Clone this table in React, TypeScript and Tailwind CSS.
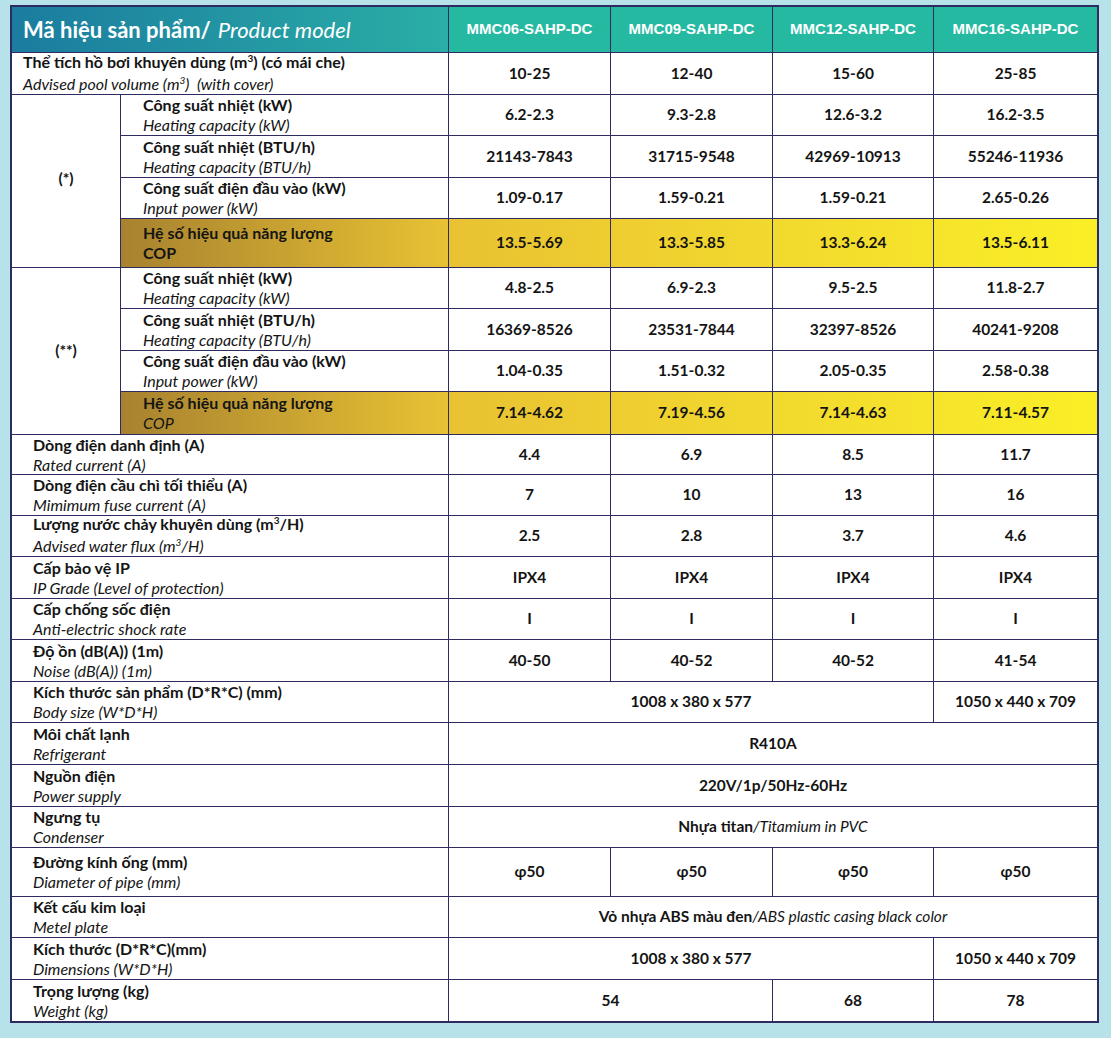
import React from "react";

type V = { t: React.ReactNode; span?: 1 | 2 | 3 | 4 };

const spanCls: Record<number, string> = {
  1: "",
  2: "col-span-2",
  3: "col-span-3",
  4: "col-span-4",
};

const copGrad = [
  "bg-[linear-gradient(90deg,#a8822f,#e8c233)]",
  "bg-[linear-gradient(90deg,#e8c233,#eecd30)]",
  "bg-[linear-gradient(90deg,#eecd30,#f2d92e)]",
  "bg-[linear-gradient(90deg,#f2d92e,#f6e42b)]",
  "bg-[linear-gradient(90deg,#f6e42b,#faef26)]",
];

function Label({
  b,
  i,
  pl,
  span2,
  cop,
}: {
  b: React.ReactNode;
  i: React.ReactNode;
  pl: string;
  span2?: boolean;
  cop?: boolean;
}) {
  return (
    <div
      className={`${span2 ? "col-span-2" : ""} ${cop ? copGrad[0] : "bg-white"} ${pl} flex flex-col justify-center text-[16px] leading-[20px] text-[#141414]`}
    >
      <div className="font-bold whitespace-nowrap">{b}</div>
      <div className="italic whitespace-nowrap">{i}</div>
    </div>
  );
}

function Vals({ vals, cop }: { vals: V[]; cop?: boolean }) {
  let col = 0;
  return (
    <>
      {vals.map((v, k) => {
        const s = v.span ?? 1;
        const g = cop ? copGrad[col + 1] : "bg-white";
        col += s;
        return (
          <div
            key={k}
            className={`${spanCls[s]} ${g} flex items-center justify-center text-[15.5px] font-bold text-[#141414] whitespace-nowrap`}
          >
            {v.t}
          </div>
        );
      })}
    </>
  );
}

const four = (a: string, b: string, c: string, d: string): V[] => [
  { t: a },
  { t: b },
  { t: c },
  { t: d },
];

const M3 = () => (
  <>
    m<span className="text-[10px] relative -top-[6px]">3</span>
  </>
);

export default function App() {
  const subPl = "pl-[22px]";
  const mainPl = "pl-[21px]";
  return (
    <div className="w-[1111px] h-[1038px] bg-[#b8e2e9] pt-[5px] pl-[10px] font-[Lato,'Open_Sans',sans-serif]">
      <div className="w-[1089px] border-2 border-[#2d2b5f] bg-[#2d2b5f] grid gap-px grid-cols-[108px_327px_161px_161px_160px_163px] grid-rows-[45px_41px_40px_41px_40px_48px_40px_41px_40px_42px_39px_40px_40px_41px_40px_41px_40px_41px_41px_40px_48px_40px_41px_41px]">
        {/* Header */}
        <div className="col-span-2 bg-[linear-gradient(90deg,#1b7c9f,#2aaea6)] flex items-center pl-[11px] text-white text-[22px] whitespace-nowrap">
          <span className="font-bold">Mã hiệu sản phẩm/</span>
          <span className="italic ml-[7px]">Product model</span>
        </div>
        {["MMC06-SAHP-DC", "MMC09-SAHP-DC", "MMC12-SAHP-DC", "MMC16-SAHP-DC"].map((m) => (
          <div
            key={m}
            className="bg-[#26b9a2] flex items-center justify-center text-white text-[15px] font-bold font-['Liberation_Sans',Arial,sans-serif] whitespace-nowrap"
          >
            {m}
          </div>
        ))}

        {/* Row 1 */}
        <Label
          span2
          pl="pl-[11px]"
          b={
            <>
              Thể tích hồ bơi khuyên dùng (<M3 />) (có mái che)
            </>
          }
          i={
            <>
              Advised pool volume (<M3 />) &nbsp;(with cover)
            </>
          }
        />
        <Vals vals={four("10-25", "12-40", "15-60", "25-85")} />

        {/* Group (*) */}
        <div className="row-span-4 bg-white flex items-center justify-center text-[15.5px] font-bold text-[#141414] pb-[4px]">
          (*)
        </div>
        <Label pl={subPl} b="Công suất nhiệt (kW)" i="Heating capacity (kW)" />
        <Vals vals={four("6.2-2.3", "9.3-2.8", "12.6-3.2", "16.2-3.5")} />
        <Label pl={subPl} b="Công suất nhiệt (BTU/h)" i="Heating capacity (BTU/h)" />
        <Vals vals={four("21143-7843", "31715-9548", "42969-10913", "55246-11936")} />
        <Label pl={subPl} b="Công suất điện đầu vào (kW)" i="Input power (kW)" />
        <Vals vals={four("1.09-0.17", "1.59-0.21", "1.59-0.21", "2.65-0.26")} />
        <Label
          cop
          pl={subPl}
          b="Hệ số hiệu quả năng lượng"
          i={<span className="not-italic font-bold">COP</span>}
        />
        <Vals cop vals={four("13.5-5.69", "13.3-5.85", "13.3-6.24", "13.5-6.11")} />

        {/* Group (**) */}
        <div className="row-span-4 bg-white flex items-center justify-center text-[15.5px] font-bold text-[#141414]">
          (**)
        </div>
        <Label pl={subPl} b="Công suất nhiệt (kW)" i="Heating capacity (kW)" />
        <Vals vals={four("4.8-2.5", "6.9-2.3", "9.5-2.5", "11.8-2.7")} />
        <Label pl={subPl} b="Công suất nhiệt (BTU/h)" i="Heating capacity (BTU/h)" />
        <Vals vals={four("16369-8526", "23531-7844", "32397-8526", "40241-9208")} />
        <Label pl={subPl} b="Công suất điện đầu vào (kW)" i="Input power (kW)" />
        <Vals vals={four("1.04-0.35", "1.51-0.32", "2.05-0.35", "2.58-0.38")} />
        <Label cop pl={subPl} b="Hệ số hiệu quả năng lượng" i="COP" />
        <Vals cop vals={four("7.14-4.62", "7.19-4.56", "7.14-4.63", "7.11-4.57")} />

        {/* Remaining rows */}
        <Label span2 pl={mainPl} b="Dòng điện danh định (A)" i="Rated current (A)" />
        <Vals vals={four("4.4", "6.9", "8.5", "11.7")} />
        <Label span2 pl={mainPl} b="Dòng điện cầu chì tối thiểu (A)" i="Mimimum fuse current (A)" />
        <Vals vals={four("7", "10", "13", "16")} />
        <Label
          span2
          pl={mainPl}
          b={
            <>
              Lượng nước chảy khuyên dùng (<M3 />/H)
            </>
          }
          i={
            <>
              Advised water flux (<M3 />/H)
            </>
          }
        />
        <Vals vals={four("2.5", "2.8", "3.7", "4.6")} />
        <Label span2 pl={mainPl} b="Cấp bảo vệ IP" i="IP Grade (Level of protection)" />
        <Vals vals={four("IPX4", "IPX4", "IPX4", "IPX4")} />
        <Label span2 pl={mainPl} b="Cấp chống sốc điện" i="Anti-electric shock rate" />
        <Vals vals={four("I", "I", "I", "I")} />
        <Label span2 pl={mainPl} b="Độ ồn (dB(A)) (1m)" i="Noise (dB(A)) (1m)" />
        <Vals vals={four("40-50", "40-52", "40-52", "41-54")} />
        <Label span2 pl={mainPl} b="Kích thước sản phẩm (D*R*C) (mm)" i="Body size (W*D*H)" />
        <Vals vals={[{ t: "1008 x 380 x 577", span: 3 }, { t: "1050 x 440 x 709" }]} />
        <Label span2 pl={mainPl} b="Môi chất lạnh" i="Refrigerant" />
        <Vals vals={[{ t: "R410A", span: 4 }]} />
        <Label span2 pl={mainPl} b="Nguồn điện" i="Power supply" />
        <Vals vals={[{ t: "220V/1p/50Hz-60Hz", span: 4 }]} />
        <Label span2 pl={mainPl} b="Ngưng tụ" i="Condenser" />
        <Vals
          vals={[
            {
              t: (
                <>
                  Nhựa titan<span className="font-normal italic">/Titamium in PVC</span>
                </>
              ),
              span: 4,
            },
          ]}
        />
        <Label span2 pl={mainPl} b="Đường kính ống (mm)" i="Diameter of pipe (mm)" />
        <Vals vals={four("φ50", "φ50", "φ50", "φ50")} />
        <Label span2 pl={mainPl} b="Kết cấu kim loại" i="Metel plate" />
        <Vals
          vals={[
            {
              t: (
                <>
                  Vỏ nhựa ABS màu đen
                  <span className="font-normal italic">/ABS plastic casing black color</span>
                </>
              ),
              span: 4,
            },
          ]}
        />
        <Label span2 pl={mainPl} b="Kích thước (D*R*C)(mm)" i="Dimensions (W*D*H)" />
        <Vals vals={[{ t: "1008 x 380 x 577", span: 3 }, { t: "1050 x 440 x 709" }]} />
        <Label span2 pl={mainPl} b="Trọng lượng (kg)" i="Weight (kg)" />
        <Vals vals={[{ t: "54", span: 2 }, { t: "68" }, { t: "78" }]} />
      </div>
    </div>
  );
}
